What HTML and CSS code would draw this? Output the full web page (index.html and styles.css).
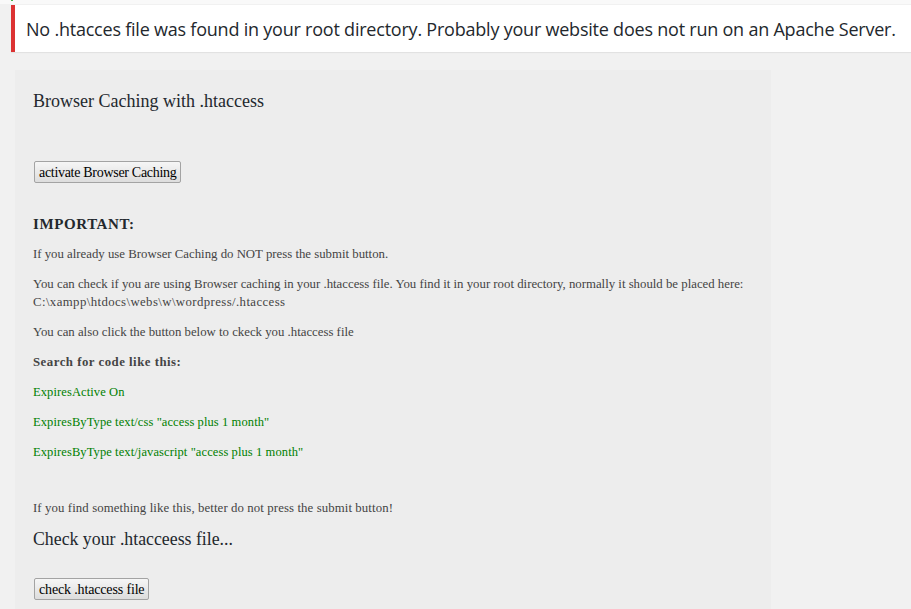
FILE: index.html
```html
<!DOCTYPE html>
<html>
<head>
<meta charset="utf-8">
<link rel="stylesheet" href="styles.css">
</head>
<body>
<div class="top-strip"><span class="green-mark"></span></div>
<div class="notice">
  <p>No .htacces file was found in your root directory. Probably your website does not run on an Apache Server.</p>
</div>
<div class="panel">
  <h3 class="title">Browser Caching with .htaccess</h3>
  <form class="form-act">
    <button type="button" class="btn">activate Browser Caching</button>
  </form>
  <h4 class="important">IMPORTANT:</h4>
  <p class="txt">If you already use Browser Caching do NOT press the submit button.</p>
  <p class="txt">You can check if you are using Browser caching in your .htaccess file. You find it in your root directory, normally it should be placed here:<br><span class="path">C:\xampp\htdocs\webs\w\wordpress/.htaccess</span></p>
  <p class="txt">You can also click the button below to ckeck you .htaccess file</p>
  <p class="txt strong">Search for code like this:</p>
  <p class="txt code">ExpiresActive On</p>
  <p class="txt code">ExpiresByType text/css "access plus 1 month"</p>
  <p class="txt code">ExpiresByType text/javascript "access plus 1 month"</p>
  <p class="txt spacer">&nbsp;</p>
  <p class="txt last">If you find something like this, better do not press the submit button!</p>
  <h3 class="title2">Check your .htacceess file...</h3>
  <form class="form-check">
    <button type="button" class="btn btn-check">check .htaccess file</button>
  </form>
</div>
</body>
</html>
```
FILE: styles.css
```css
html, body {
  margin: 0;
  padding: 0;
}
body {
  background: #f1f1f1;
  font-family: "Liberation Serif", serif;
  overflow: hidden;
  height: 609px;
}
.top-strip {
  height: 4px;
  background: #f9f9f9;
  position: relative;
}
.green-mark {
  position: absolute;
  left: 11px;
  top: 0;
  width: 2px;
  height: 1px;
  background: #46b450;
}
.notice {
  margin: 1px 0 0 11px;
  background: #fff;
  border-left: 4px solid #dc3232;
  box-shadow: 0 1px 1px rgba(0,0,0,.06);
  padding: 0 0 0 11px;
  height: 47px;
  display: flex;
  align-items: center;
}
.notice p {
  margin: 0;
  font-family: "Open Sans", sans-serif;
  font-size: 18px;
  color: #23282d;
  white-space: nowrap;
  letter-spacing: -0.22px;
}
.panel {
  margin: 18px 0 0 15px;
  width: 756px;
  background: #ededed;
  padding: 20px 18px 0 18px;
  box-sizing: border-box;
  height: 539px;
  color: #444;
}
.title {
  margin: 0;
  font-weight: normal;
  font-size: 18px;
  line-height: 22px;
  color: #23282d;
}
.form-act {
  margin: 49px 0 0 1px;
}
.btn {
  font-family: "Liberation Serif", serif;
  font-size: 14px;
  letter-spacing: -0.3px;
  color: #000;
  background: linear-gradient(#f6f6f6, #dddddd);
  border: 1px solid #a3a3a3;
  border-radius: 2px;
  padding: 2px 4px 1px;
  line-height: 17px;
}
.btn-check {
  letter-spacing: -0.15px;
}
.important {
  margin: 32px 0 0;
  font-size: 15px;
  line-height: 18px;
  font-weight: bold;
  color: #23282d;
  letter-spacing: 0.6px;
}
.txt {
  margin: 12px 0 0;
  font-size: 12.8px;
  line-height: 18px;
  color: #444;
}
.path {
  letter-spacing: 0.4px;
}
.txt.strong {
  font-weight: bold;
  letter-spacing: 0.5px;
}
.txt.code {
  color: #008000;
  font-size: 12.5px;
  letter-spacing: 0.1px;
}
.txt.spacer {
  margin-top: 10px;
}
.txt.last {
  margin-top: 10px;
  letter-spacing: 0.1px;
}
.title2 {
  margin: 11px 0 0;
  font-weight: normal;
  font-size: 17.8px;
  line-height: 22px;
  color: #23282d;
}
.form-check {
  margin: 28px 0 0 1px;
}
```
